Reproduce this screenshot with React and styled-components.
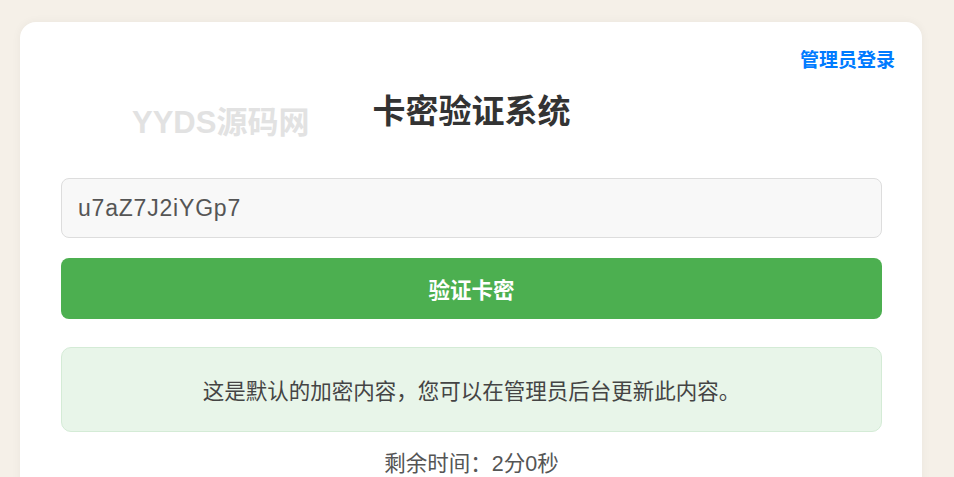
import styled, { createGlobalStyle } from "styled-components";

const GlobalStyle = createGlobalStyle`
  html, body {
    margin: 0;
    padding: 0;
    background: #f5f0e8;
    font-family: "Liberation Sans", "Noto Sans CJK SC", sans-serif;
  }
`;

const Page = styled.div`
  padding: 22px 32px 0 20px;
  height: 477px;
  box-sizing: border-box;
  overflow: hidden;
`;

const Card = styled.div`
  position: relative;
  background: #fff;
  border-radius: 16px;
  box-shadow: 0 0 10px rgba(0, 0, 0, 0.05);
  padding: 70px 40px 40px 41px;
`;

const AdminLink = styled.a`
  position: absolute;
  top: 23px;
  right: 27px;
  color: #007bff;
  font-weight: 700;
  font-size: 19px;
  text-decoration: none;
`;

const Watermark = styled.div`
  position: absolute;
  top: 75px;
  left: 112px;
  color: #e2e2e2;
  font-weight: 700;
  font-size: 31px;
  user-select: none;
`;

const Title = styled.h1`
  margin: 0;
  padding-top: 1px;
  text-align: center;
  font-size: 33px;
  line-height: 38px;
  font-weight: 700;
  color: #333;
`;

const Form = styled.form`
  display: flex;
  flex-direction: column;
  gap: 20px;
  margin-top: 47px;
`;

const Input = styled.input`
  height: 60px;
  box-sizing: border-box;
  border: 1px solid #ddd;
  border-radius: 8px;
  background: #f8f8f8;
  padding: 0 16px;
  font-family: "Liberation Sans", "Noto Sans CJK SC", sans-serif;
  font-size: 23px;
  letter-spacing: 0.8px;
  color: #555;
  outline: none;
`;

const Button = styled.button`
  height: 61px;
  border: none;
  border-radius: 8px;
  background: #4caf50;
  color: #fff;
  font-family: "Liberation Sans", "Noto Sans CJK SC", sans-serif;
  font-size: 21.5px;
  font-weight: 700;
`;

const Result = styled.div`
  margin-top: 28px;
  height: 85px;
  box-sizing: border-box;
  display: flex;
  align-items: center;
  justify-content: center;
  background: #e8f5e9;
  border: 1px solid #d4ebd6;
  border-radius: 10px;
  color: #444;
  font-size: 21.5px;
`;

const Timer = styled.div`
  margin-top: 14px;
  text-align: center;
  color: #555;
  font-size: 21.5px;
`;

export default function App() {
  return (
    <>
      <GlobalStyle />
      <Page>
        <Card>
          <AdminLink href="#">管理员登录</AdminLink>
          <Watermark>YYDS源码网</Watermark>
          <Title>卡密验证系统</Title>
          <Form onSubmit={(e) => e.preventDefault()}>
            <Input defaultValue="u7aZ7J2iYGp7" />
            <Button type="submit">验证卡密</Button>
          </Form>
          <Result>这是默认的加密内容，您可以在管理员后台更新此内容。</Result>
          <Timer>剩余时间：2分0秒</Timer>
        </Card>
      </Page>
    </>
  );
}
